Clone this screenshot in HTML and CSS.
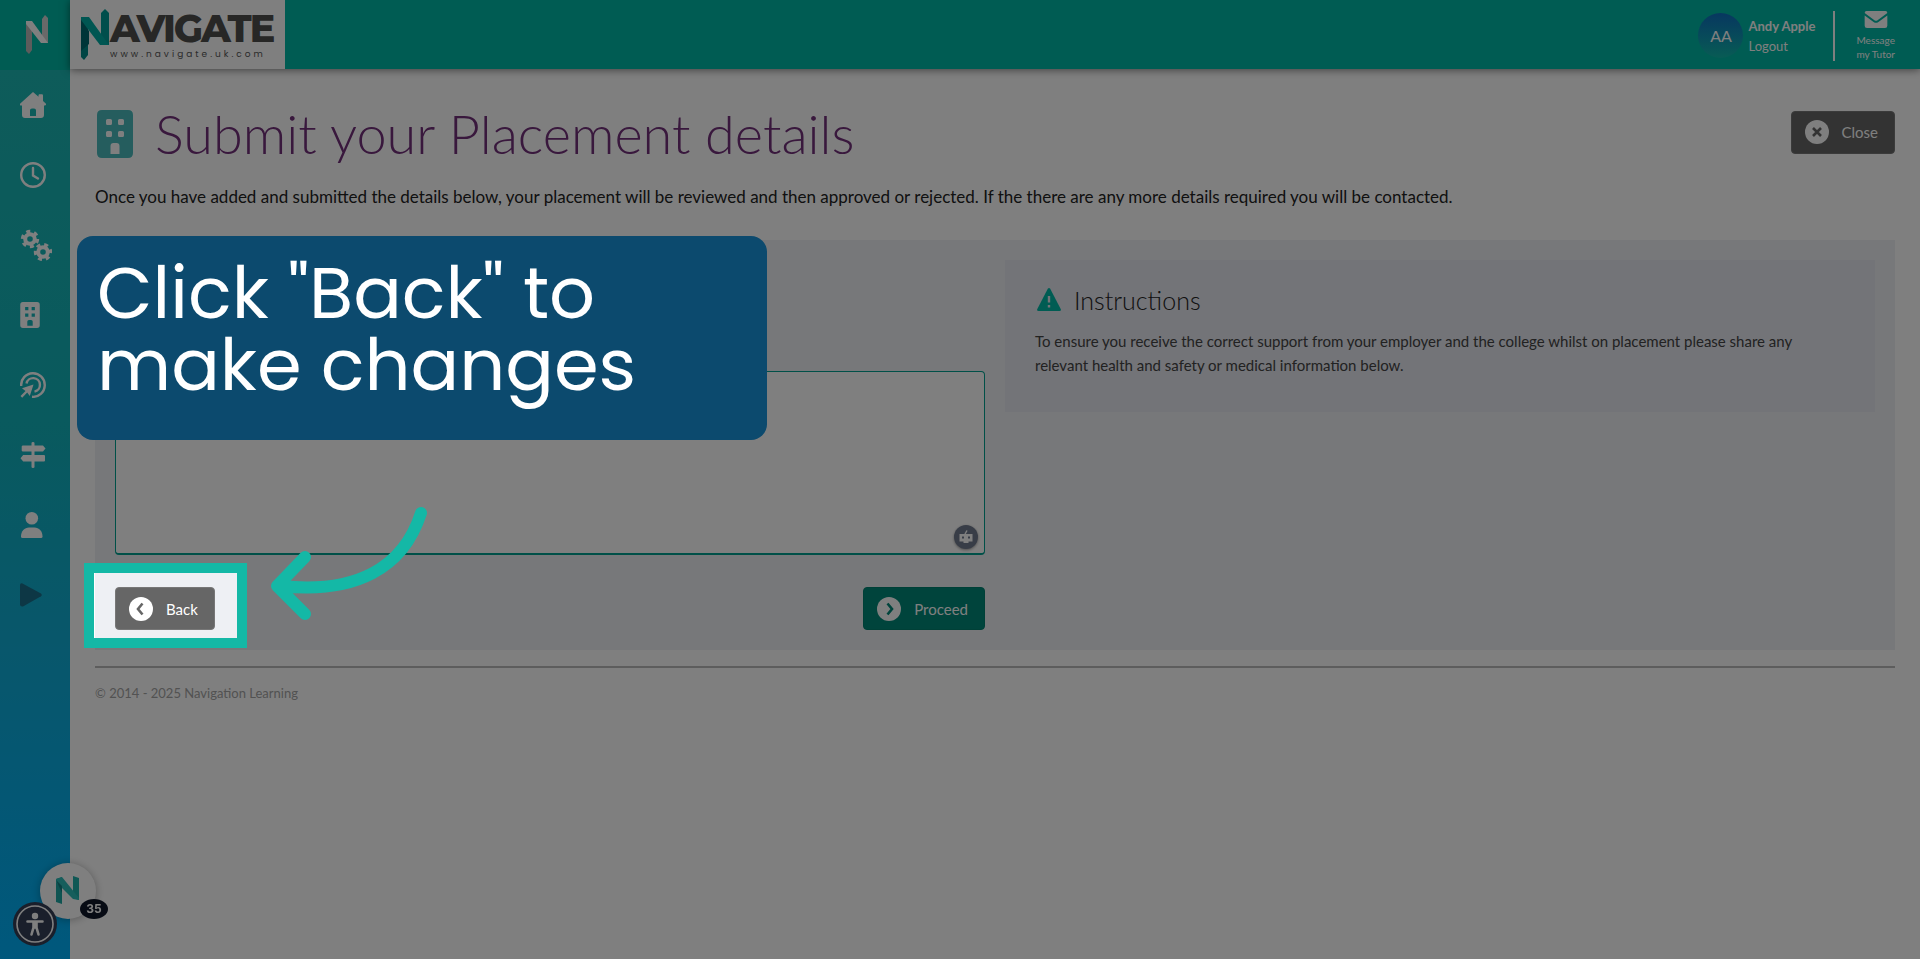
FILE: index.html
```
<!DOCTYPE html>
<html lang="en">
<head>
    <meta charset="UTF-8">
    <meta name="viewport" content="width=device-width, initial-scale=1.0">
    <title>Submit your Placement details</title>
    <link rel="stylesheet" href="styles.css">
</head>
<body>
    <nav class="sidebar" aria-label="Main menu">
        <a href="#" class="sidebar-logo" aria-label="Navigate">
            <svg width="24" height="40" viewBox="0 0 24 40">
                <path d="M1 6h6v29l-3 4-3-3z" fill="#b9b9b9"/>
                <path d="M17 4l3-4 3 3v25h-6z" fill="#d2d2d2"/>
                <path d="M1 6h6l16 22h-7L1 9z" fill="#fff"/>
            </svg>
        </a>
        <a href="#" class="nav-item" aria-label="Home">
            <svg width="26" height="26" viewBox="0 0 26 26">
                <path fill-rule="evenodd" d="M13 0l5.500 4.700V3.500c0-.8.500-1.300 1.200-1.300h2c.8 0 1.300.5 1.300 1.300V9l2.700 2.400c.8.800.3 2.200-.8 2.200H24V23c0 1.800-1.200 3-3 3H5c-1.800 0-3-1.200-3-3v-9.400H1c-1.100 0-1.400-1.400-.7-2.100zM10 24h6v-5.500c0-1.200-.8-2-2-2h-2c-1.200 0-2 .8-2 2z"/>
            </svg>
        </a>
        <a href="#" class="nav-item" aria-label="Timesheets">
            <svg width="26" height="26" viewBox="0 0 26 26" class="line-icon">
                <circle cx="13" cy="13" r="11.800"/>
                <path d="M13 6v7.500l5 3"/>
            </svg>
        </a>
        <a href="#" class="nav-item" aria-label="Skills">
            <svg width="32" height="32" viewBox="0 0 32 32">
                <g fill="none" stroke="#fff">
                    <circle cx="10" cy="10" r="4.800" stroke-width="4"/>
                    <circle cx="10" cy="10" r="7.600" stroke-width="3.200" stroke-dasharray="4 3.960"/>
                    <circle cx="23" cy="23" r="4.800" stroke-width="4"/>
                    <circle cx="23" cy="23" r="7.600" stroke-width="3.200" stroke-dasharray="4 3.960" stroke-dashoffset="3"/>
                </g>
            </svg>
        </a>
        <a href="#" class="nav-item" aria-label="Placements">
            <svg width="20" height="26" viewBox="0 0 36 48">
                <path fill-rule="evenodd" d="M5 0h26q5 0 5 5v38q0 5-5 5H5q-5 0-5-5V5q0-5 5-5zM9 9v6h6V9zM21 9v6h6V9zM9 21v6h6v-6zM21 21v6h6v-6zM13 44h10V36q0-3-3-3h-4q-3 0-3 3z"/>
            </svg>
        </a>
        <a href="#" class="nav-item" aria-label="Targets">
            <svg width="26" height="26" viewBox="0 0 26 26">
                <g fill="none" stroke="#fff" stroke-width="2.400">
                    <path d="M1.200 14A11.800 11.800 0 1 1 12 24.800"/>
                    <path d="M6.500 11.500A6.800 6.800 0 1 1 14.500 19.600"/>
                </g>
                <path d="M13.500 12.500L9.800 24l-2.600-3.500-5 5.200L.5 24l5-5L2 16.300z"/>
            </svg>
        </a>
        <a href="#" class="nav-item" aria-label="Pathways">
            <svg width="26" height="26" viewBox="0 0 26 26">
                <path d="M11.500 1q0-1 1.500-1t1.500 1v2.500H23l2.500 3L23 9.500h-8.500V13H24q1 0 1 1v4.500q0 1-1 1h-9.500V25q0 1-1.500 1t-1.500-1v-5.500H3.200L.5 16.200 3.200 13h8.300V9.500H3q-1.300 0-1.300-1V4.500q0-1 1.300-1h8.500z"/>
            </svg>
        </a>
        <a href="#" class="nav-item" aria-label="Profile">
            <svg width="24" height="26" viewBox="0 0 24 26">
                <circle cx="11.800" cy="6.300" r="6.300"/>
                <path d="M1 24.500C1 19 4.500 15.500 9 15.500h5.500c4.500 0 8 3.500 8 9q0 1.500-1.500 1.500H2.500Q1 26 1 24.500z"/>
            </svg>
        </a>
        <a href="#" class="nav-item nav-play" aria-label="Play">
            <svg width="22" height="24" viewBox="0 0 22 24">
                <path d="M0 2Q0 0 2 0.300L21 10.500Q22.500 12 21 13.300L3 23.500Q0 24 0 21.500z"/>
            </svg>
        </a>
    </nav>

    <div class="page">
        <header class="topbar">
            <a href="#" class="brand">
                <svg width="30" height="52" viewBox="0 0 30 52">
                    <path d="M1 8h7v38l-4 5-3-3z" fill="#008a88"/>
                    <path d="M21 4l4-4 4 4v32h-8z" fill="#009c98"/>
                    <path d="M1 8h8l20 28h-9L1 11z" fill="#00aca4"/>
                    <path d="M1 11l8 11v13L1 42z" fill="#006b70"/>
                </svg>
                <span class="brand-text">
                    <span class="brand-name">AVIGATE</span>
                    <span class="brand-url">www.navigate.uk.com</span>
                </span>
            </a>
            <div class="user">
                <span class="avatar">AA</span>
                <div class="user-text">
                    <strong>Andy Apple</strong>
                    <a href="#">Logout</a>
                </div>
                <a href="#" class="message">
                    <svg width="24" height="18" viewBox="0 0 24 18">
                        <path d="M2 0h20q2 0 2 2.200L13.300 10q-1.300.9-2.600 0L0 2.200Q0 0 2 0z"/>
                        <path d="M0 4.800l9.800 7q2.200 1.500 4.400 0L24 4.800V15.500Q24 18 21.500 18h-19Q0 18 0 15.500z"/>
                    </svg>
                    <span>Message<br>my Tutor</span>
                </a>
            </div>
        </header>

        <main>
            <div class="title-row">
                <svg width="36" height="48" viewBox="0 0 36 48" class="title-icon">
                    <path fill-rule="evenodd" d="M5 0h26q5 0 5 5v38q0 5-5 5H5q-5 0-5-5V5q0-5 5-5zM10.500 9Q9 9 9 10.500v3Q9 15 10.500 15h3q1.500 0 1.500-1.500v-3Q15 9 13.500 9zM22.500 9Q21 9 21 10.500v3q0 1.500 1.500 1.500h3q1.500 0 1.500-1.500v-3Q27 9 25.500 9zM10.500 21Q9 21 9 22.500v3Q9 27 10.500 27h3q1.500 0 1.500-1.500v-3q0-1.500-1.500-1.500zM22.500 21q-1.500 0-1.500 1.500v3q0 1.500 1.500 1.500h3q1.500 0 1.500-1.500v-3q0-1.500-1.500-1.500zM13.500 44h9V36q0-3-3-3h-3q-3 0-3 3z"/>
                </svg>
                <h1>Submit your Placement details</h1>
                <button type="button" class="btn">
                    <svg width="24" height="24" viewBox="0 0 24 24">
                        <circle cx="12" cy="12" r="12" fill="#fff"/>
                        <path d="M8 8l8 8M16 8l-8 8"/>
                    </svg>
                    Close
                </button>
            </div>
            <p class="intro">Once you have added and submitted the details below, your placement will be reviewed and then approved or rejected. If the there are any more details required you will be contacted.</p>

            <section class="panel">
                <form class="details-form">
                    <div class="field">
                        <textarea aria-label="Health and safety or medical information"></textarea>
                        <span class="assist">
                            <svg width="14" height="14" viewBox="0 0 14 14">
                                <path d="M6 4L8 .5" stroke="#fff" stroke-width="1.500"/>
                                <path fill="#fff" fill-rule="evenodd" d="M.5 4h13v7.500H9.500V13h-5v-1.500h-4zM3 6.500v2h2v-2zM9 6.500v2h2v-2z"/>
                            </svg>
                        </span>
                    </div>
                    <div class="form-buttons">
                        <div class="back">
                            <button type="button" class="btn">
                                <svg width="24" height="24" viewBox="0 0 24 24">
                                    <circle cx="12" cy="12" r="12" fill="#fff"/>
                                    <path d="M13.500 6.500L9 12l4.500 5.500"/>
                                </svg>
                                Back
                            </button>
                            <div class="spotlight"></div>
                            <svg class="arrow" width="160" height="120" viewBox="0 0 160 120">
                                <path d="M150 9C132 65 84 90 10 82M34 53L6 82l28 28"/>
                            </svg>
                        </div>
                        <button type="button" class="btn btn-proceed">
                            <svg width="24" height="24" viewBox="0 0 24 24">
                                <circle cx="12" cy="12" r="12" fill="#fff"/>
                                <path d="M10.500 6.500L15 12l-4.500 5.500"/>
                            </svg>
                            Proceed
                        </button>
                    </div>
                    <div class="callout">Click "Back" to make changes</div>
                </form>
                <aside class="instructions">
                    <h2>
                        <svg width="24" height="24" viewBox="0 0 24 24">
                            <path fill="#00b8a6" d="M10.800.8Q12-.6 13.200.8L23.700 21Q24.500 23 22.500 23h-21Q-.5 23 .3 21z"/>
                            <path d="M12 8v6.500M12 17v2.500" stroke="#e6e8f0" stroke-width="2.400"/>
                        </svg>
                        Instructions
                    </h2>
                    <p>To ensure you receive the correct support from your employer and the college whilst on placement please share any relevant health and safety or medical information below.</p>
                </aside>
            </section>
            <footer>© 2014 - 2025 Navigation Learning</footer>
        </main>
    </div>

    <button type="button" class="chat" aria-label="Open resource centre">
        <svg width="24" height="30" viewBox="0 0 24 30">
            <path d="M0 3l6-2v27l-6-2z" fill="#1fa8a5"/>
            <path d="M17 0l6 2v22l-6-2z" fill="#1fb0aa"/>
            <path d="M0 3l6-2 17 21v2l-6-1L0 6z" fill="#2cbcb8"/>
            <path d="M0 4l6 6v7z" fill="#158285"/>
        </svg>
        <span class="chat-count">35</span>
    </button>
    <button type="button" class="accessibility" aria-label="Accessibility">
        <svg width="38" height="38" viewBox="0 0 38 38">
            <circle cx="19" cy="19" r="18" fill="none" stroke="#fff" stroke-width="1.600"/>
            <circle cx="19" cy="11" r="3.200" fill="#fff"/>
            <path d="M11.500 16.500h15M17.500 16.500v6l-2 7M20.500 16.500v6l2 7M19 16.500v6" fill="none" stroke="#fff" stroke-width="2.600" stroke-linecap="round"/>
        </svg>
    </button>
</body>
</html>
```
FILE: styles.css
```
* {
    box-sizing: border-box;
}
body {
    margin: 0;
    min-height: 100vh;
    display: flex;
    font-family: Lato, 'Open Sans', sans-serif;
    color: #222;
    background: #fff;
    overflow-x: hidden;
}
a {
    color: inherit;
    text-decoration: none;
}

/* sidebar */
.sidebar {
    flex: 0 0 70px;
    background: linear-gradient(#1cb8b4 70px, #12b4bc 420px, #10aed8 650px, #00b0fa);
    fill: #fff;
}
.sidebar-logo {
    display: flex;
    align-items: center;
    height: 70px;
    padding-left: 25px;
    background: #00b8a6;
}
.nav-item {
    display: flex;
    align-items: center;
    height: 70px;
    padding-left: 20px;
}
.line-icon {
    fill: none;
    stroke: #fff;
    stroke-width: 2.4px;
    stroke-linecap: round;
}
.nav-play {
    fill: #1a6f8a;
}

/* top bar */
.page {
    flex: 1;
    min-width: 0;
}
.topbar {
    display: flex;
    justify-content: space-between;
    height: 69px;
    padding-right: 25px;
    background: #00b8a6;
    color: #fff;
    box-shadow: 0 1px 8px rgba(0, 0, 0, 0.5);
}
.brand {
    display: flex;
    align-items: center;
    padding: 0 12px 0 10px;
    background: #fff;
}
.brand-text {
    display: flex;
    flex-direction: column;
    padding-top: 1px;
}
.brand-name {
    font-family: Montserrat, Poppins, Lato, sans-serif;
    font-size: 38px;
    font-weight: 800;
    line-height: 38px;
    letter-spacing: -2px;
    color: #4e4e4c;
}
.brand-url {
    font-family: Poppins, Lato, sans-serif;
    font-size: 9px;
    line-height: 12px;
    letter-spacing: 3px;
    color: #555;
}
.user {
    display: flex;
    align-items: center;
    padding-top: 2px;
}
.avatar {
    display: flex;
    align-items: center;
    justify-content: center;
    width: 45px;
    height: 45px;
    margin-right: 5px;
    border-radius: 50%;
    background: linear-gradient(#0f6fc0, #10b8aa);
    font-size: 16px;
}
.user-text {
    display: flex;
    flex-direction: column;
    padding-right: 18px;
    font-size: 13px;
    line-height: 20px;
}
.message {
    display: flex;
    flex-direction: column;
    align-items: center;
    justify-content: center;
    height: 50px;
    padding-left: 21px;
    border-left: 2px solid #fff;
    font-size: 10px;
    line-height: 14px;
    text-align: center;
    fill: #fff;
}
.message svg {
    margin-bottom: 5px;
}

/* content */
main {
    padding: 30px 25px;
}
.title-row {
    display: flex;
    align-items: center;
    height: 70px;
    padding-left: 2px;
}
.title-row .btn {
    margin-bottom: 4px;
}
.title-icon {
    fill: #4bbabd;
}
h1 {
    flex: 1;
    margin: 0 0 0 22px;
    font-size: 54px;
    font-weight: 300;
    line-height: 70px;
    color: #72307a;
}
.intro {
    margin: 16px 0 31px;
    font-size: 17px;
    line-height: 24px;
}
.btn {
    display: flex;
    align-items: center;
    gap: 13px;
    height: 43px;
    padding: 0 16px 0 13px;
    border: 1px solid #777;
    border-radius: 4px;
    background: #666;
    color: #fff;
    font-family: inherit;
    font-size: 15px;
    cursor: pointer;
}
.btn path {
    fill: none;
    stroke: #666;
    stroke-width: 2.6px;
}
.btn-proceed {
    background: #008878;
    border-color: #00806f;
}
.btn-proceed path {
    stroke: #008878;
}
.panel {
    display: grid;
    grid-template-columns: 1fr 1fr;
    align-items: start;
    gap: 20px;
    padding: 20px;
    background: #eef0f4;
}
.details-form {
    position: relative;
    padding-top: 111px;
}
.field {
    position: relative;
}
textarea {
    display: block;
    width: 100%;
    height: 184px;
    border: 1px solid #00a090;
    border-bottom-width: 2px;
    border-radius: 4px;
    background: #fff;
    resize: none;
}
.assist {
    position: absolute;
    right: 7px;
    bottom: 6px;
    display: flex;
    align-items: center;
    justify-content: center;
    width: 24px;
    height: 24px;
    border-radius: 50%;
    background: #707a8e;
    box-shadow: 0 1px 3px rgba(0, 0, 0, 0.4);
}
.form-buttons {
    display: flex;
    justify-content: space-between;
    margin-top: 32px;
}
.back {
    position: relative;
}
.instructions {
    min-height: 152px;
    padding: 24px 30px;
    background: #e6e8f0;
}
.instructions h2 {
    display: flex;
    align-items: center;
    gap: 13px;
    margin: 0;
    padding-left: 2px;
    font-size: 25px;
    font-weight: 300;
    line-height: 32px;
}
.instructions p {
    margin: 13px 0 0;
    font-size: 15px;
    line-height: 24px;
    color: #444;
}
footer {
    margin-top: 16px;
    padding-top: 13px;
    border-top: 2px solid #bbb;
    font-size: 13px;
    line-height: 24px;
    color: #a4a4a4;
}

/* floating buttons */
.chat,
.accessibility {
    position: fixed;
    display: flex;
    align-items: center;
    justify-content: center;
    padding: 0;
    border: 0;
    border-radius: 50%;
}
.chat {
    left: 40px;
    bottom: 40px;
    width: 56px;
    height: 56px;
    background: #fff;
    box-shadow: 0 1px 8px rgba(0, 0, 0, 0.3);
}
.chat-count {
    position: absolute;
    right: -12px;
    bottom: 0;
    width: 28px;
    border-radius: 50%;
    background: #0e1628;
    color: #fff;
    font: bold 12px/20px Inter, sans-serif;
}
.accessibility {
    left: 13px;
    bottom: 13px;
    width: 44px;
    height: 44px;
    background: #343f56;
}

/* guide layer */
.spotlight {
    position: absolute;
    z-index: 10;
    top: -24px;
    left: -31px;
    right: -32px;
    bottom: -18px;
    border: 10px solid #14b8a6;
    box-shadow: 0 0 0 3000px rgba(0, 0, 0, 0.5);
}
.arrow {
    position: absolute;
    z-index: 11;
    top: -83px;
    left: 156px;
    fill: none;
    stroke: #14b8a6;
    stroke-width: 12px;
    stroke-linecap: round;
    stroke-linejoin: round;
}
.callout {
    position: absolute;
    z-index: 11;
    top: -24px;
    left: -38px;
    width: 690px;
    padding: 21px 120px 39px 20px;
    border-radius: 16px;
    background: #0c4a6e;
    color: #fff;
    font-family: Poppins, Inter, sans-serif;
    font-size: 72px;
    line-height: 72px;
}
```
